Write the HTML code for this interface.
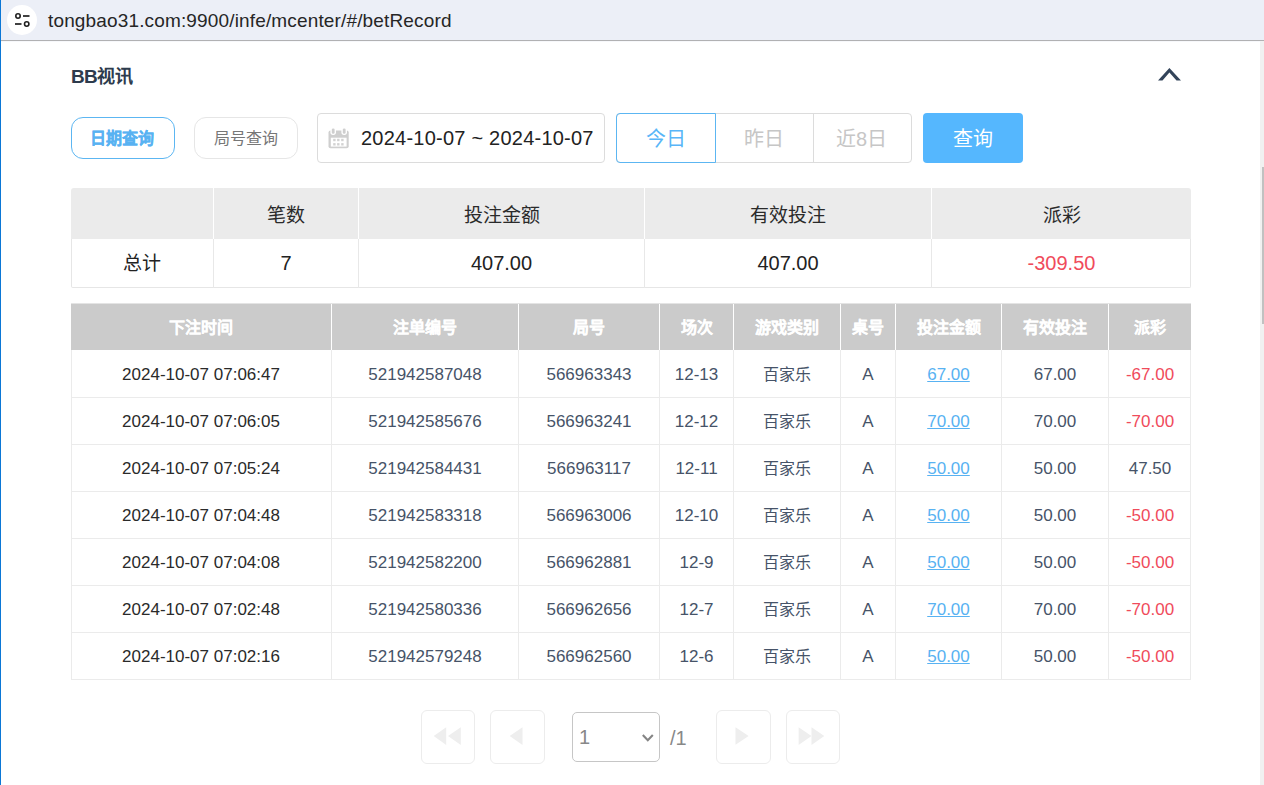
<!DOCTYPE html>
<html lang="zh-CN">
<head>
<meta charset="utf-8">
<style>
*{margin:0;padding:0;box-sizing:border-box;}
html,body{width:1264px;height:785px;overflow:hidden;background:#fff;}
body{position:relative;font-family:"Liberation Sans",sans-serif;color:#222;}
.abs{position:absolute;}
#lb{left:0;top:0;width:1px;height:785px;background:#0b77d6;z-index:5;}
#bar{left:0;top:0;width:1264px;height:40px;background:#eceff7;}
#barline{left:0;top:40px;width:1264px;height:1px;background:#b1b1b3;}
#barline2{left:0;top:41px;width:1264px;height:1px;background:#f7f8fb;}
#ico{left:7px;top:5px;width:30px;height:30px;border-radius:50%;background:#fff;}
#url{left:48px;top:10px;font-size:19px;letter-spacing:0.15px;line-height:22px;color:#262626;white-space:nowrap;}
#track{left:1260px;top:41px;width:4px;height:744px;background:#f1f1f1;}
#thumb{left:1262px;top:167px;width:2px;height:157px;background:#c1c1c1;}
#title{left:71px;top:65px;font-size:19px;line-height:24px;letter-spacing:-0.6px;font-weight:bold;color:#2d3b4d;white-space:nowrap;}
.btn{top:117px;height:42px;width:104px;border-radius:12px;font-size:16px;text-align:center;line-height:42px;}
#b1{left:71px;padding-right:2px;border:1px solid #5cb6f2;color:#58b2f2;font-weight:bold;-webkit-text-stroke:0.25px #58b2f2;}
#b2{left:194px;border:1px solid #e6e6e6;color:#777;}
#date{left:317px;top:113px;width:288px;height:50px;border:1px solid #dcdcdc;border-radius:4px;}
#datetxt{left:361px;top:127px;font-size:20px;letter-spacing:0.23px;line-height:22px;color:#222;white-space:nowrap;}
#seg{left:616px;top:113px;width:296px;height:50px;border:1px solid #dcdcdc;border-radius:4px;}
.sg{top:113px;height:50px;font-size:20px;text-align:center;line-height:52px;color:#c6c6c6;}
#s1{left:616px;width:100px;border:1px solid #5cb6f2;border-radius:4px 0 0 4px;color:#58b6f8;line-height:50px;}
#s2{left:716px;width:97px;padding-right:1px;}
#s3{left:813px;width:99px;border-left:1px solid #dcdcdc;padding-right:3px;}
#q{left:923px;top:113px;width:100px;height:50px;border-radius:4px;background:#55b7fe;color:#fff;font-size:20px;text-align:center;line-height:52px;}
#sumhd{left:71px;top:188px;width:1120px;height:51px;background:#ebebeb;border-radius:3px 3px 0 0;}
#sumbd{left:71px;top:239px;width:1120px;height:49px;border:1px solid #e6e6e6;border-top:none;border-radius:0 0 2px 2px;}
.vl{width:1px;}
.hl{left:71px;width:1120px;height:1px;background:#ebebeb;}
.cell{text-align:center;white-space:nowrap;}
.sh{top:188px;height:51px;line-height:55px;font-size:19px;color:#2a2a2a;}
.sb{top:239px;height:48px;line-height:48px;font-size:20px;color:#222;}
#dethd{left:71px;top:304px;width:1120px;height:46px;background:#cbcbcb;box-shadow:0 -1px 0 #e4e4e4;}
#detbd{left:71px;top:350px;width:1120px;height:330px;border:1px solid #ebebeb;border-top:none;}
.dh{top:304px;height:46px;line-height:48px;font-size:16px;font-weight:bold;color:#fff;-webkit-text-stroke:0.15px #fff;}
.db{height:47px;line-height:49px;font-size:17px;color:#465368;}
.cj{font-size:16px;}
.d0{color:#2a2a2a;}
.u span{color:#58b2f2;text-decoration:underline;}
.red{color:#f04b5b !important;}
.pg{top:710px;width:54px;height:54px;border:1px solid #ececec;border-radius:6px;}
#sel{left:572px;top:712px;width:88px;height:50px;border:1px solid #c6c6c6;border-radius:5px;}
#seltxt{left:579px;top:726px;line-height:23px;font-size:20px;color:#888;}
#slash{left:670px;top:727px;line-height:23px;font-size:20px;color:#888;}
</style>
</head>
<body>
<div id="lb" class="abs"></div>
<div id="bar" class="abs"></div>
<div id="barline" class="abs"></div>
<div id="barline2" class="abs"></div>
<div id="ico" class="abs"><svg width="30" height="30" viewBox="0 0 30 30"><circle cx="11" cy="11" r="2.2" fill="none" stroke="#1f1f1f" stroke-width="1.6"/><line x1="16" y1="11" x2="22.5" y2="11" stroke="#1f1f1f" stroke-width="1.7"/><line x1="8" y1="19" x2="14.5" y2="19" stroke="#1f1f1f" stroke-width="1.7"/><circle cx="19.7" cy="19" r="2.2" fill="none" stroke="#1f1f1f" stroke-width="1.6"/></svg></div>
<div id="url" class="abs">tongbao31.com:9900/infe/mcenter/#/betRecord</div>
<div id="track" class="abs"></div>
<div id="thumb" class="abs"></div>

<div id="title" class="abs">BB<span style="font-size:18px;letter-spacing:-0.2px">视讯</span></div>
<svg class="abs" style="left:1150px;top:60px" width="40" height="30" viewBox="0 0 40 30"><polygon points="8,20.5 19.4,8 31,20.5 26.5,20.5 19.4,12.6 12.5,20.5" fill="#33445a"/></svg>

<div id="b1" class="abs btn">日期查询</div>
<div id="b2" class="abs btn">局号查询</div>
<div id="date" class="abs"></div>
<svg class="abs" style="left:328px;top:128px" width="22" height="22" viewBox="0 0 22 22"><rect x="0.5" y="2.6" width="20.2" height="17.6" rx="2" fill="#cfcfcf"/><rect x="2.8" y="9.7" width="15.8" height="8.9" fill="#fff"/><g fill="#d2d2d2"><rect x="5.2" y="10.8" width="2.4" height="2.4"/><rect x="9.1" y="10.8" width="2.4" height="2.4"/><rect x="13.2" y="10.8" width="2.4" height="2.4"/><rect x="5.2" y="15.1" width="2.4" height="2.4"/><rect x="9.1" y="15.1" width="2.4" height="2.4"/><rect x="13.2" y="15.1" width="2.4" height="2.4"/></g><rect x="2.4" y="-0.5" width="5.6" height="7.4" rx="2.6" fill="#fff"/><rect x="13.4" y="-0.5" width="5.6" height="7.4" rx="2.6" fill="#fff"/><rect x="3.8" y="0.5" width="2.8" height="5.2" rx="1.3" fill="#cfcfcf"/><rect x="14.8" y="0.5" width="2.8" height="5.2" rx="1.3" fill="#cfcfcf"/></svg>
<div id="datetxt" class="abs">2024-10-07 ~ 2024-10-07</div>
<div id="seg" class="abs"></div>
<div id="s1" class="abs sg">今日</div>
<div id="s2" class="abs sg">昨日</div>
<div id="s3" class="abs sg">近8日</div>
<div id="q" class="abs">查询</div>

<div class="abs" id="sumhd"></div><div class="abs" id="sumbd"></div>
<div class="abs vl" style="left:213px;top:188px;height:51px;background:#fff"></div>
<div class="abs vl" style="left:213px;top:239px;height:49px;background:#e8e8e8"></div>
<div class="abs vl" style="left:358px;top:188px;height:51px;background:#fff"></div>
<div class="abs vl" style="left:358px;top:239px;height:49px;background:#e8e8e8"></div>
<div class="abs vl" style="left:644px;top:188px;height:51px;background:#fff"></div>
<div class="abs vl" style="left:644px;top:239px;height:49px;background:#e8e8e8"></div>
<div class="abs vl" style="left:931px;top:188px;height:51px;background:#fff"></div>
<div class="abs vl" style="left:931px;top:239px;height:49px;background:#e8e8e8"></div>
<div class="abs cell sb" style="left:71px;width:142px;font-size:19px;line-height:50px">总计</div>
<div class="abs cell sh" style="left:214px;width:144px">笔数</div>
<div class="abs cell sb" style="left:214px;width:144px">7</div>
<div class="abs cell sh" style="left:359px;width:285px">投注金额</div>
<div class="abs cell sb" style="left:359px;width:285px">407.00</div>
<div class="abs cell sh" style="left:645px;width:286px">有效投注</div>
<div class="abs cell sb" style="left:645px;width:286px">407.00</div>
<div class="abs cell sh" style="left:932px;width:259px">派彩</div>
<div class="abs cell sb red" style="left:932px;width:259px">-309.50</div>
<div class="abs" id="dethd"></div><div class="abs" id="detbd"></div>
<div class="abs vl" style="left:331px;top:304px;height:46px;background:#fff"></div>
<div class="abs vl" style="left:331px;top:350px;height:330px;background:#ebebeb"></div>
<div class="abs vl" style="left:518px;top:304px;height:46px;background:#fff"></div>
<div class="abs vl" style="left:518px;top:350px;height:330px;background:#ebebeb"></div>
<div class="abs vl" style="left:659px;top:304px;height:46px;background:#fff"></div>
<div class="abs vl" style="left:659px;top:350px;height:330px;background:#ebebeb"></div>
<div class="abs vl" style="left:733px;top:304px;height:46px;background:#fff"></div>
<div class="abs vl" style="left:733px;top:350px;height:330px;background:#ebebeb"></div>
<div class="abs vl" style="left:840px;top:304px;height:46px;background:#fff"></div>
<div class="abs vl" style="left:840px;top:350px;height:330px;background:#ebebeb"></div>
<div class="abs vl" style="left:895px;top:304px;height:46px;background:#fff"></div>
<div class="abs vl" style="left:895px;top:350px;height:330px;background:#ebebeb"></div>
<div class="abs vl" style="left:1001px;top:304px;height:46px;background:#fff"></div>
<div class="abs vl" style="left:1001px;top:350px;height:330px;background:#ebebeb"></div>
<div class="abs vl" style="left:1108px;top:304px;height:46px;background:#fff"></div>
<div class="abs vl" style="left:1108px;top:350px;height:330px;background:#ebebeb"></div>
<div class="abs hl" style="top:397px"></div>
<div class="abs hl" style="top:444px"></div>
<div class="abs hl" style="top:491px"></div>
<div class="abs hl" style="top:538px"></div>
<div class="abs hl" style="top:585px"></div>
<div class="abs hl" style="top:632px"></div>
<div class="abs hl" style="top:679px"></div>
<div class="abs cell dh" style="left:71px;width:260px">下注时间</div>
<div class="abs cell dh" style="left:332px;width:186px">注单编号</div>
<div class="abs cell dh" style="left:519px;width:140px">局号</div>
<div class="abs cell dh" style="left:660px;width:73px">场次</div>
<div class="abs cell dh" style="left:734px;width:106px">游戏类别</div>
<div class="abs cell dh" style="left:841px;width:54px">桌号</div>
<div class="abs cell dh" style="left:896px;width:105px">投注金额</div>
<div class="abs cell dh" style="left:1002px;width:106px">有效投注</div>
<div class="abs cell dh" style="left:1109px;width:82px">派彩</div>
<div class="abs cell db d0" style="left:71px;top:350px;width:260px"><span>2024-10-07 07:06:47</span></div>
<div class="abs cell db" style="left:332px;top:350px;width:186px"><span>521942587048</span></div>
<div class="abs cell db" style="left:519px;top:350px;width:140px"><span>566963343</span></div>
<div class="abs cell db" style="left:660px;top:350px;width:73px"><span>12-13</span></div>
<div class="abs cell db cj" style="left:734px;top:350px;width:106px"><span>百家乐</span></div>
<div class="abs cell db" style="left:841px;top:350px;width:54px"><span>A</span></div>
<div class="abs cell db u" style="left:896px;top:350px;width:105px"><span>67.00</span></div>
<div class="abs cell db" style="left:1002px;top:350px;width:106px"><span>67.00</span></div>
<div class="abs cell db red" style="left:1109px;top:350px;width:82px"><span>-67.00</span></div>
<div class="abs cell db d0" style="left:71px;top:397px;width:260px"><span>2024-10-07 07:06:05</span></div>
<div class="abs cell db" style="left:332px;top:397px;width:186px"><span>521942585676</span></div>
<div class="abs cell db" style="left:519px;top:397px;width:140px"><span>566963241</span></div>
<div class="abs cell db" style="left:660px;top:397px;width:73px"><span>12-12</span></div>
<div class="abs cell db cj" style="left:734px;top:397px;width:106px"><span>百家乐</span></div>
<div class="abs cell db" style="left:841px;top:397px;width:54px"><span>A</span></div>
<div class="abs cell db u" style="left:896px;top:397px;width:105px"><span>70.00</span></div>
<div class="abs cell db" style="left:1002px;top:397px;width:106px"><span>70.00</span></div>
<div class="abs cell db red" style="left:1109px;top:397px;width:82px"><span>-70.00</span></div>
<div class="abs cell db d0" style="left:71px;top:444px;width:260px"><span>2024-10-07 07:05:24</span></div>
<div class="abs cell db" style="left:332px;top:444px;width:186px"><span>521942584431</span></div>
<div class="abs cell db" style="left:519px;top:444px;width:140px"><span>566963117</span></div>
<div class="abs cell db" style="left:660px;top:444px;width:73px"><span>12-11</span></div>
<div class="abs cell db cj" style="left:734px;top:444px;width:106px"><span>百家乐</span></div>
<div class="abs cell db" style="left:841px;top:444px;width:54px"><span>A</span></div>
<div class="abs cell db u" style="left:896px;top:444px;width:105px"><span>50.00</span></div>
<div class="abs cell db" style="left:1002px;top:444px;width:106px"><span>50.00</span></div>
<div class="abs cell db" style="left:1109px;top:444px;width:82px"><span>47.50</span></div>
<div class="abs cell db d0" style="left:71px;top:491px;width:260px"><span>2024-10-07 07:04:48</span></div>
<div class="abs cell db" style="left:332px;top:491px;width:186px"><span>521942583318</span></div>
<div class="abs cell db" style="left:519px;top:491px;width:140px"><span>566963006</span></div>
<div class="abs cell db" style="left:660px;top:491px;width:73px"><span>12-10</span></div>
<div class="abs cell db cj" style="left:734px;top:491px;width:106px"><span>百家乐</span></div>
<div class="abs cell db" style="left:841px;top:491px;width:54px"><span>A</span></div>
<div class="abs cell db u" style="left:896px;top:491px;width:105px"><span>50.00</span></div>
<div class="abs cell db" style="left:1002px;top:491px;width:106px"><span>50.00</span></div>
<div class="abs cell db red" style="left:1109px;top:491px;width:82px"><span>-50.00</span></div>
<div class="abs cell db d0" style="left:71px;top:538px;width:260px"><span>2024-10-07 07:04:08</span></div>
<div class="abs cell db" style="left:332px;top:538px;width:186px"><span>521942582200</span></div>
<div class="abs cell db" style="left:519px;top:538px;width:140px"><span>566962881</span></div>
<div class="abs cell db" style="left:660px;top:538px;width:73px"><span>12-9</span></div>
<div class="abs cell db cj" style="left:734px;top:538px;width:106px"><span>百家乐</span></div>
<div class="abs cell db" style="left:841px;top:538px;width:54px"><span>A</span></div>
<div class="abs cell db u" style="left:896px;top:538px;width:105px"><span>50.00</span></div>
<div class="abs cell db" style="left:1002px;top:538px;width:106px"><span>50.00</span></div>
<div class="abs cell db red" style="left:1109px;top:538px;width:82px"><span>-50.00</span></div>
<div class="abs cell db d0" style="left:71px;top:585px;width:260px"><span>2024-10-07 07:02:48</span></div>
<div class="abs cell db" style="left:332px;top:585px;width:186px"><span>521942580336</span></div>
<div class="abs cell db" style="left:519px;top:585px;width:140px"><span>566962656</span></div>
<div class="abs cell db" style="left:660px;top:585px;width:73px"><span>12-7</span></div>
<div class="abs cell db cj" style="left:734px;top:585px;width:106px"><span>百家乐</span></div>
<div class="abs cell db" style="left:841px;top:585px;width:54px"><span>A</span></div>
<div class="abs cell db u" style="left:896px;top:585px;width:105px"><span>70.00</span></div>
<div class="abs cell db" style="left:1002px;top:585px;width:106px"><span>70.00</span></div>
<div class="abs cell db red" style="left:1109px;top:585px;width:82px"><span>-70.00</span></div>
<div class="abs cell db d0" style="left:71px;top:632px;width:260px"><span>2024-10-07 07:02:16</span></div>
<div class="abs cell db" style="left:332px;top:632px;width:186px"><span>521942579248</span></div>
<div class="abs cell db" style="left:519px;top:632px;width:140px"><span>566962560</span></div>
<div class="abs cell db" style="left:660px;top:632px;width:73px"><span>12-6</span></div>
<div class="abs cell db cj" style="left:734px;top:632px;width:106px"><span>百家乐</span></div>
<div class="abs cell db" style="left:841px;top:632px;width:54px"><span>A</span></div>
<div class="abs cell db u" style="left:896px;top:632px;width:105px"><span>50.00</span></div>
<div class="abs cell db" style="left:1002px;top:632px;width:106px"><span>50.00</span></div>
<div class="abs cell db red" style="left:1109px;top:632px;width:82px"><span>-50.00</span></div>

<div class="abs pg" style="left:421px"></div>
<div class="abs pg" style="left:490px;width:55px"></div>
<div class="abs pg" style="left:716px;width:55px"></div>
<div class="abs pg" style="left:786px"></div>
<svg class="abs" style="left:421px;top:710px" width="420" height="54" viewBox="421 710 420 54">
<g fill="#eeeeee">
<polygon points="433.7,736 446.2,727.3 446.2,745"/>
<polygon points="448,736 460.8,727.3 460.8,745"/>
<polygon points="509.7,736 522.5,727.3 522.5,745"/>
<polygon points="748.6,736 735.5,727.3 735.5,744.7"/>
<polygon points="811.5,736 798.6,727.3 798.6,745"/>
<polygon points="824.3,736 811.5,727.3 811.5,745"/>
</g>
</svg>
<div id="sel" class="abs"></div>
<div id="seltxt" class="abs">1</div>
<svg class="abs" style="left:640px;top:732px" width="16" height="12" viewBox="0 0 16 12"><polyline points="2.8,3 7.8,8.2 12.8,3" fill="none" stroke="#858585" stroke-width="2.1"/></svg>
<div id="slash" class="abs">/1</div>
</body>
</html>
